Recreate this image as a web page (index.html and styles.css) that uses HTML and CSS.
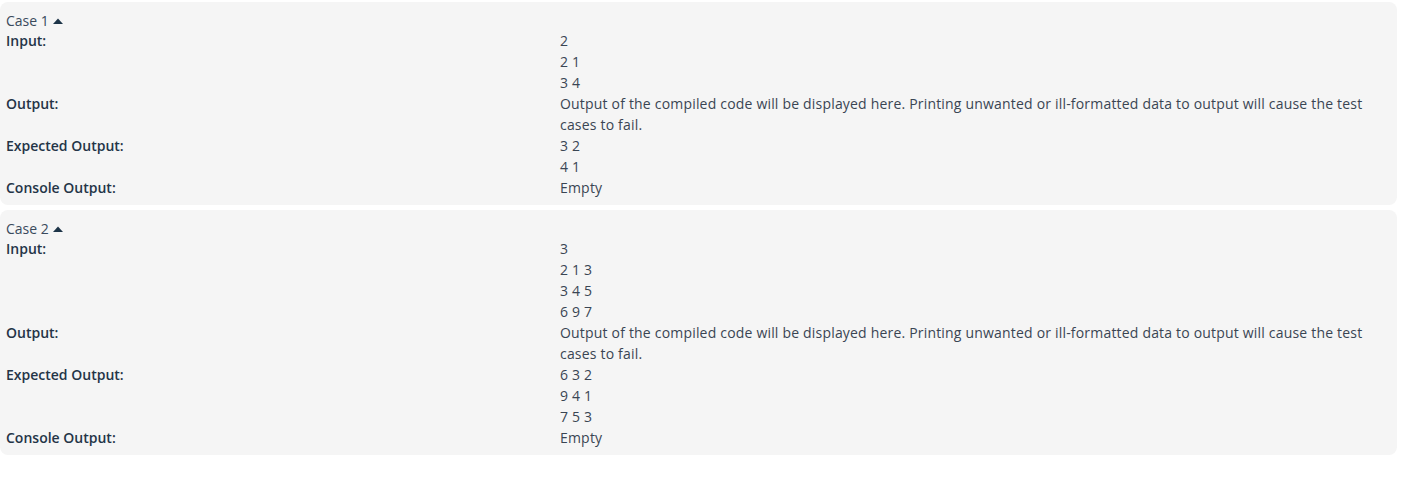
FILE: index.html
```html
<!DOCTYPE html>
<html lang="en">

<head>
    <meta charset="UTF-8">
    <meta name="viewport" content="width=device-width, initial-scale=1.0">
    <title>Test cases</title>
    <link rel="stylesheet" href="styles.css">
</head>

<body>
    <div class="cases">
        <div class="case">
            <div class="case-title">Case 1 <svg class="caret" width="10" height="6" viewBox="0 0 10 6"><path d="M0 6 L5 0.5 L10 6 Z" /></svg></div>
            <div class="row">
                <div class="label">Input:</div>
                <div class="value">2<br>2 1<br>3 4</div>
            </div>
            <div class="row">
                <div class="label">Output:</div>
                <div class="value">Output of the compiled code will be displayed here. Printing unwanted or ill-formatted data to output will cause the test cases to fail.</div>
            </div>
            <div class="row">
                <div class="label">Expected Output:</div>
                <div class="value">3 2<br>4 1</div>
            </div>
            <div class="row">
                <div class="label">Console Output:</div>
                <div class="value">Empty</div>
            </div>
        </div>
        <div class="case">
            <div class="case-title">Case 2 <svg class="caret" width="10" height="6" viewBox="0 0 10 6"><path d="M0 6 L5 0.5 L10 6 Z" /></svg></div>
            <div class="row">
                <div class="label">Input:</div>
                <div class="value">3<br>2 1 3<br>3 4 5<br>6 9 7</div>
            </div>
            <div class="row">
                <div class="label">Output:</div>
                <div class="value">Output of the compiled code will be displayed here. Printing unwanted or ill-formatted data to output will cause the test cases to fail.</div>
            </div>
            <div class="row">
                <div class="label">Expected Output:</div>
                <div class="value">6 3 2<br>9 4 1<br>7 5 3</div>
            </div>
            <div class="row">
                <div class="label">Console Output:</div>
                <div class="value">Empty</div>
            </div>
        </div>
    </div>
</body>

</html>
```

FILE: styles.css
```css
html,
body {
    margin: 0;
}

body {
    font-family: "Open Sans", "Noto Sans", sans-serif;
    font-size: 14px;
    line-height: 21px;
    color: #333;
    background: #fff;
}

.cases {
    display: flex;
    flex-direction: column;
    gap: 5px;
    padding: 2px 10px 0 0;
}

.case {
    background: #f5f5f5;
    border-radius: 8px;
    padding: 9px 6px 7px 6px;
}

.case-title {
    line-height: 19px;
    color: #3a4a5c;
}

.caret {
    vertical-align: 2px;
    margin-left: 1px;
}

.caret path {
    fill: #1d3448;
}

.row {
    display: grid;
    grid-template-columns: 554px 1fr;
}

.label {
    font-weight: 600;
    color: #243447;
}

.value {
    color: #3a4553;
    letter-spacing: 0.19px;
}
```
